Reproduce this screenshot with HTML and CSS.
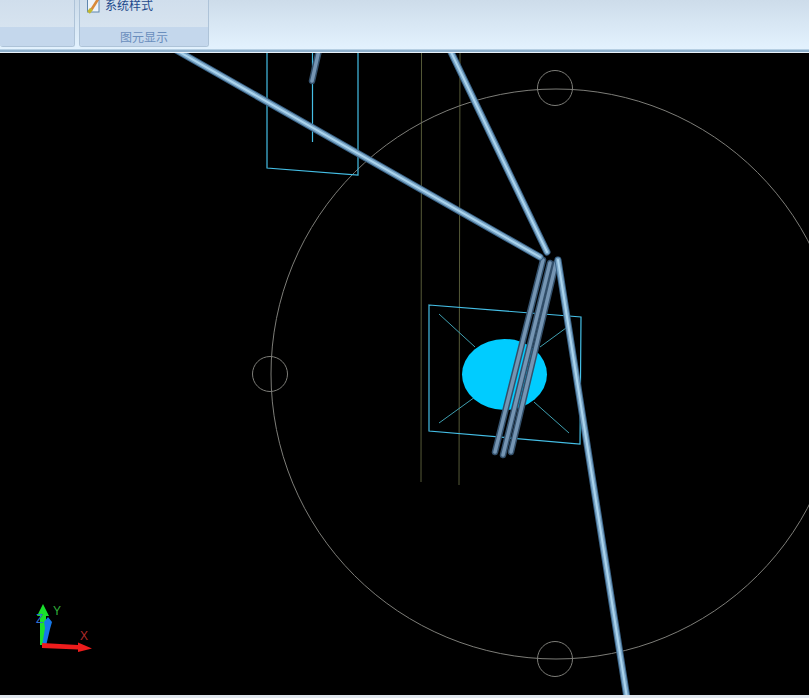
FILE: index.html
```html
<!DOCTYPE html>
<html lang="zh-CN">
<head>
    <meta charset="UTF-8">
    <title>图元显示</title>
    <link rel="stylesheet" href="styles.css">
</head>
<body>
    <header class="ribbon">
        <div class="group group-first">
            <div class="group-body"></div>
            <div class="group-title"></div>
        </div>
        <div class="group group-display">
            <div class="group-body">
                <div class="tool">
                    <svg class="tool-icon" width="16" height="14" viewBox="0 0 16 14">
                        <rect x="1.5" y="-3" width="11.5" height="15" fill="#eef4fa" stroke="#5f86ad"/>
                        <path d="M5.5 9.5 L11.5 0" stroke="#d98a3a" stroke-width="2.6"/>
                        <path d="M11.5 0 L14 -3" stroke="#c8651f" stroke-width="2.6"/>
                        <path d="M2.5 12.5 L5.5 9" stroke="#c2b832" stroke-width="3.5"/>
                    </svg>
                    <span>系统样式</span>
                </div>
            </div>
            <div class="group-title">图元显示</div>
        </div>
    </header>
    <div class="ribbon-edge"></div>

    <svg class="stage" viewBox="0 53 809 642" width="809" height="642">
        <defs>
            <g id="pipe-top"><line x1="176" y1="50" x2="540" y2="257"/></g>
            <g id="pipe-mid"><line x1="450" y1="50" x2="547" y2="252"/></g>
            <g id="pipe-long"><line x1="558" y1="260" x2="627" y2="698"/></g>
            <g id="pipe-short"><line x1="319" y1="50" x2="312" y2="81"/></g>
            <g id="bar-a"><line x1="543" y1="260" x2="495" y2="452"/></g>
            <g id="bar-b"><line x1="550" y1="263" x2="503" y2="455"/></g>
            <g id="bar-c"><line x1="556" y1="263" x2="511" y2="452"/></g>
        </defs>

        <!-- 辅助线 -->
        <g class="olive">
            <line x1="421.5" y1="53" x2="421" y2="482"/>
            <line x1="460" y1="53" x2="459" y2="485"/>
        </g>

        <!-- 圆 -->
        <g class="circles">
            <circle cx="556" cy="374" r="285"/>
            <circle cx="555" cy="88" r="17.5"/>
            <circle cx="270" cy="374" r="17.5"/>
            <circle cx="555" cy="659" r="17.5"/>
        </g>

        <!-- 基础 -->
        <g class="cyan">
            <path d="M267 53 V168 L358 175 V53"/>
            <line x1="312.5" y1="53" x2="312.5" y2="142"/>
            <path d="M429 305 L581 317 L580 444 L429 431 Z"/>
        </g>
        <g class="teal">
            <line x1="439" y1="314" x2="475" y2="347"/>
            <line x1="566" y1="328" x2="540" y2="347"/>
            <line x1="439" y1="423" x2="475" y2="397"/>
            <line x1="569" y1="433" x2="534" y2="402"/>
        </g>
        <ellipse class="disc" cx="504.5" cy="374.5" rx="42.5" ry="35.5"/>

        <!-- 杆件 -->
        <g class="bar-dark"><use href="#bar-a"/><use href="#bar-b"/><use href="#bar-c"/><use href="#pipe-short"/></g>
        <g class="bar-light"><use href="#bar-a"/><use href="#bar-b"/><use href="#bar-c"/><use href="#pipe-short"/></g>
        <g class="pipe-dark"><use href="#pipe-top"/><use href="#pipe-mid"/><use href="#pipe-long"/></g>
        <g class="pipe-mid"><use href="#pipe-top"/><use href="#pipe-mid"/><use href="#pipe-long"/></g>
        <g class="pipe-light"><use href="#pipe-top"/><use href="#pipe-mid"/><use href="#pipe-long"/></g>

        <!-- 坐标轴 -->
        <g class="axes">
            <path class="axis-green" d="M40 645 L40 616 L37 616 L43 604 L49 616 L46 616 L46 645 Z"/>
            <path class="axis-blue" d="M42 646 L45 628 L44 622 L48 617 L52 622 L50 629 L46 646 Z"/>
            <path class="axis-red" d="M42 643 L78 645 L78 642.5 L92 648.5 L78 652 L78 649.5 L42 648 Z"/>
            <text class="label-y" x="53" y="615">Y</text>
            <text class="label-z" x="36" y="623">Z</text>
            <text class="label-x" x="80" y="640">X</text>
        </g>
    </svg>

    <div class="status-edge"></div>
</body>
</html>
```

FILE: styles.css
```css
html, body {
    margin: 0;
    padding: 0;
    height: 698px;
    overflow: hidden;
    background-color: #000;
}

body {
    display: flex;
    flex-direction: column;
}

/* Ribbon */
.ribbon {
    display: flex;
    gap: 4px;
    height: 49px;
    background: linear-gradient(to bottom, #cddcea, #e3f2fe);
    font-family: "Noto Sans CJK SC", sans-serif;
}

.ribbon-edge {
    height: 4px;
    box-sizing: border-box;
    background-color: #8eb0cc;
    border-top: 1px solid #b6cfe3;
    border-bottom: 1px solid #e8f2fb;
}

.group {
    display: flex;
    flex-direction: column;
    height: 47px;
    box-sizing: border-box;
    border: 1px solid #aec3d8;
    border-top: none;
    border-radius: 0 0 3px 3px;
    overflow: hidden;
    background: linear-gradient(to bottom, #d0deec, #dbe7f2);
}

.group-first {
    width: 75px;
    border-left: none;
}

.group-display {
    width: 130px;
}

.group-body {
    height: 27px;
}

.group-title {
    flex: 1;
    background-color: #c4d7ec;
    color: #6a8ebd;
    font-size: 12px;
    line-height: 19px;
    text-align: center;
}

.tool {
    display: flex;
    align-items: flex-start;
    gap: 3px;
    padding-left: 6px;
    height: 14px;
    color: #1f4a8c;
    font-size: 12px;
    line-height: 10px;
}

.tool-icon {
    flex: none;
}

/* Drawing area */
.stage {
    display: block;
    flex: none;
    background-color: #000;
}

.stage line,
.stage path,
.stage circle {
    fill: none;
}

.olive {
    stroke: #565a38;
    stroke-width: 1;
}

.circles {
    stroke: #7d7d78;
    stroke-width: 1;
}

.cyan {
    stroke: #45bfe6;
    stroke-width: 1.2;
}

.teal {
    stroke: #3f9fb0;
    stroke-width: 1;
}

.disc {
    fill: #00ccff;
}

.bar-dark {
    stroke: #33506b;
    stroke-width: 6.5;
    stroke-linecap: round;
}

.bar-light {
    stroke: #7595b3;
    stroke-width: 3.5;
    stroke-linecap: round;
}

.pipe-dark {
    stroke: #3a6488;
    stroke-width: 7;
    stroke-linecap: round;
}

.pipe-mid {
    stroke: #7aa5c6;
    stroke-width: 5;
    stroke-linecap: round;
}

.pipe-light {
    stroke: #acd5ee;
    stroke-width: 2;
    stroke-linecap: round;
}

.stage .axis-green {
    fill: #19e02c;
}

.stage .axis-blue {
    fill: #1677e8;
}

.stage .axis-red {
    fill: #ee1c1c;
}

.axes text {
    font-family: "Liberation Sans", sans-serif;
    font-size: 12px;
}

.label-x {
    fill: #b02a2a;
}

.label-y {
    fill: #2fae3a;
}

.label-z {
    fill: #2f6fd0;
}

.status-edge {
    height: 3px;
    background-color: #dfe6ee;
}
```
